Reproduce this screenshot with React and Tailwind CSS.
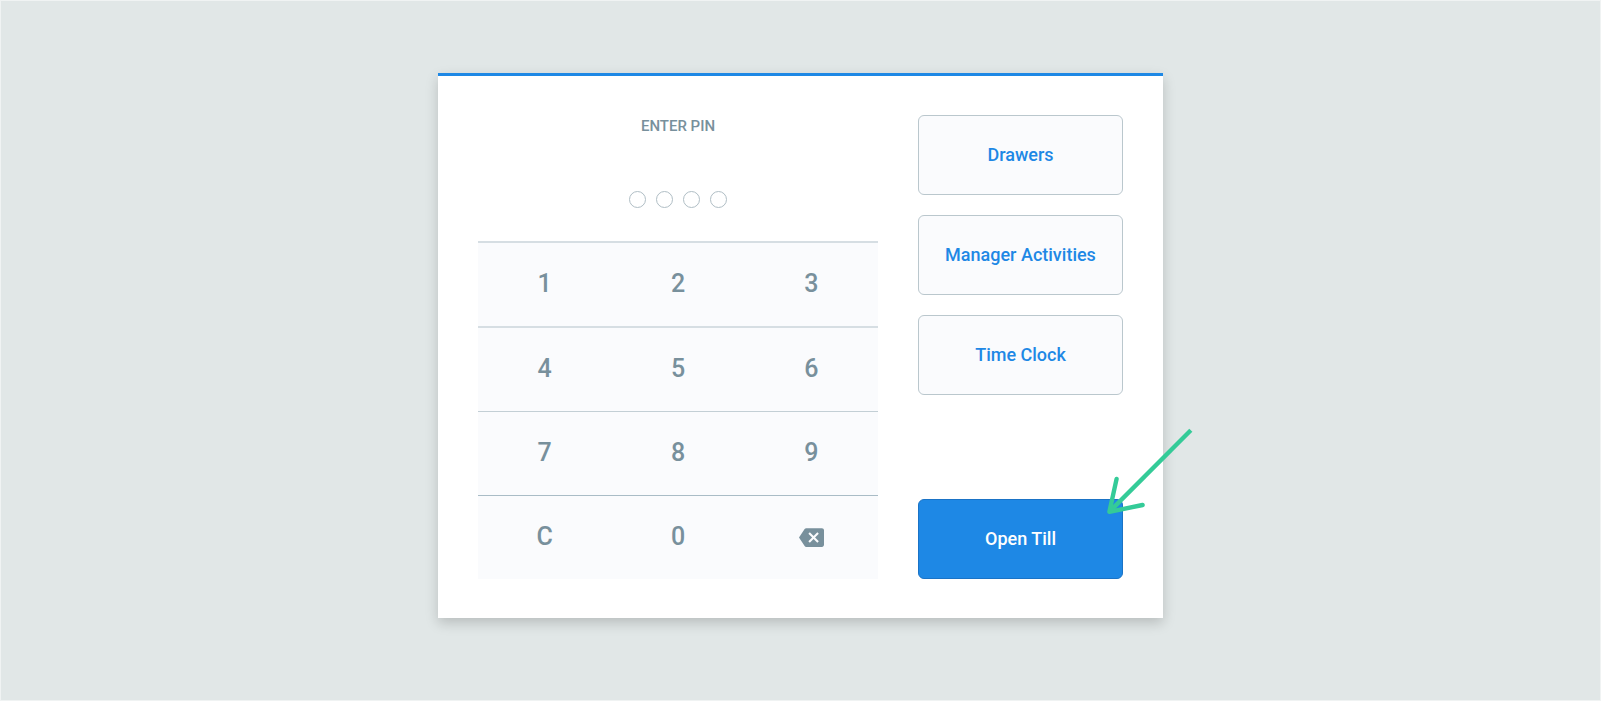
import React from "react";
import { MdBackspace } from "react-icons/md";

const KEY_ROWS = [
  { keys: ["1", "2", "3"], line: "border-t-2 border-[#d6dee3]" },
  { keys: ["4", "5", "6"], line: "border-t-2 border-[#d6dee3]" },
  { keys: ["7", "8", "9"], line: "border-t border-[#c3cfd5]" },
  { keys: ["C", "0", "back"], line: "border-t border-[#a9bcc6]" },
];

const ACTIONS = ["Drawers", "Manager Activities", "Time Clock"];

const KEY_CLASS = "flex h-[83px] items-center justify-center text-[#78909c]";

function Key({ value }) {
  if (value === "back") {
    return (
      <button type="button" aria-label="Backspace" className={KEY_CLASS}>
        <MdBackspace size={25} />
      </button>
    );
  }
  return (
    <button type="button" className={KEY_CLASS + " pb-0.5 text-[25px] leading-8 font-medium"}>
      {value}
    </button>
  );
}

function Arrow() {
  return (
    <svg
      className="pointer-events-none absolute -top-[73px] -right-[72px] h-[92px] w-[92px]"
      viewBox="0 0 92 92"
      fill="none"
      stroke="#34cb98"
      strokeWidth="4.4"
      strokeLinejoin="round"
      aria-hidden="true"
    >
      <path d="M87.8 4.3 L6.8 85.4" />
      <path d="M13.6 52.9 L6.4 85.8 L39.6 79" strokeLinecap="round" />
    </svg>
  );
}

export default function App() {
  return (
    <div className="min-h-screen border border-[#f0f3f3] bg-[#e1e7e7] px-4 py-[72px] font-[Roboto,sans-serif]">
      <main className="mx-auto flex w-full max-w-[725px] gap-10 border-t-3 border-[#1e88e5] bg-white px-10 py-[39px] shadow-[0_5px_12px_rgba(0,0,0,0.18)]">
        <section className="flex flex-1 flex-col">
          <h1 className="text-center text-[15px] leading-[22px] font-medium text-[#78909c]">
            ENTER PIN
          </h1>
          <div
            role="img"
            aria-label="0 of 4 digits entered"
            className="mt-[54px] flex justify-center gap-[10px]"
          >
            {[0, 1, 2, 3].map((i) => (
              <span key={i} className="size-[17px] rounded-full border border-[#b0bec5]" />
            ))}
          </div>
          <div className="mt-[33px] bg-[#fafbfd]">
            {KEY_ROWS.map((row) => (
              <div key={row.keys[0]} className={"grid grid-cols-3 " + row.line}>
                {row.keys.map((k) => (
                  <Key key={k} value={k} />
                ))}
              </div>
            ))}
          </div>
        </section>
        <aside className="flex w-[205px] flex-col gap-5">
          {ACTIONS.map((label) => (
            <button
              key={label}
              type="button"
              className="h-20 rounded-md border border-[#bac7cd] bg-[#fafbfd] text-lg font-medium text-[#1e88e5]"
            >
              {label}
            </button>
          ))}
          <div className="relative mt-auto">
            <button
              type="button"
              className="h-20 w-full rounded-md border border-[#1a73c6] bg-[#1e88e5] text-lg font-medium text-white"
            >
              Open Till
            </button>
            <Arrow />
          </div>
        </aside>
      </main>
    </div>
  );
}
